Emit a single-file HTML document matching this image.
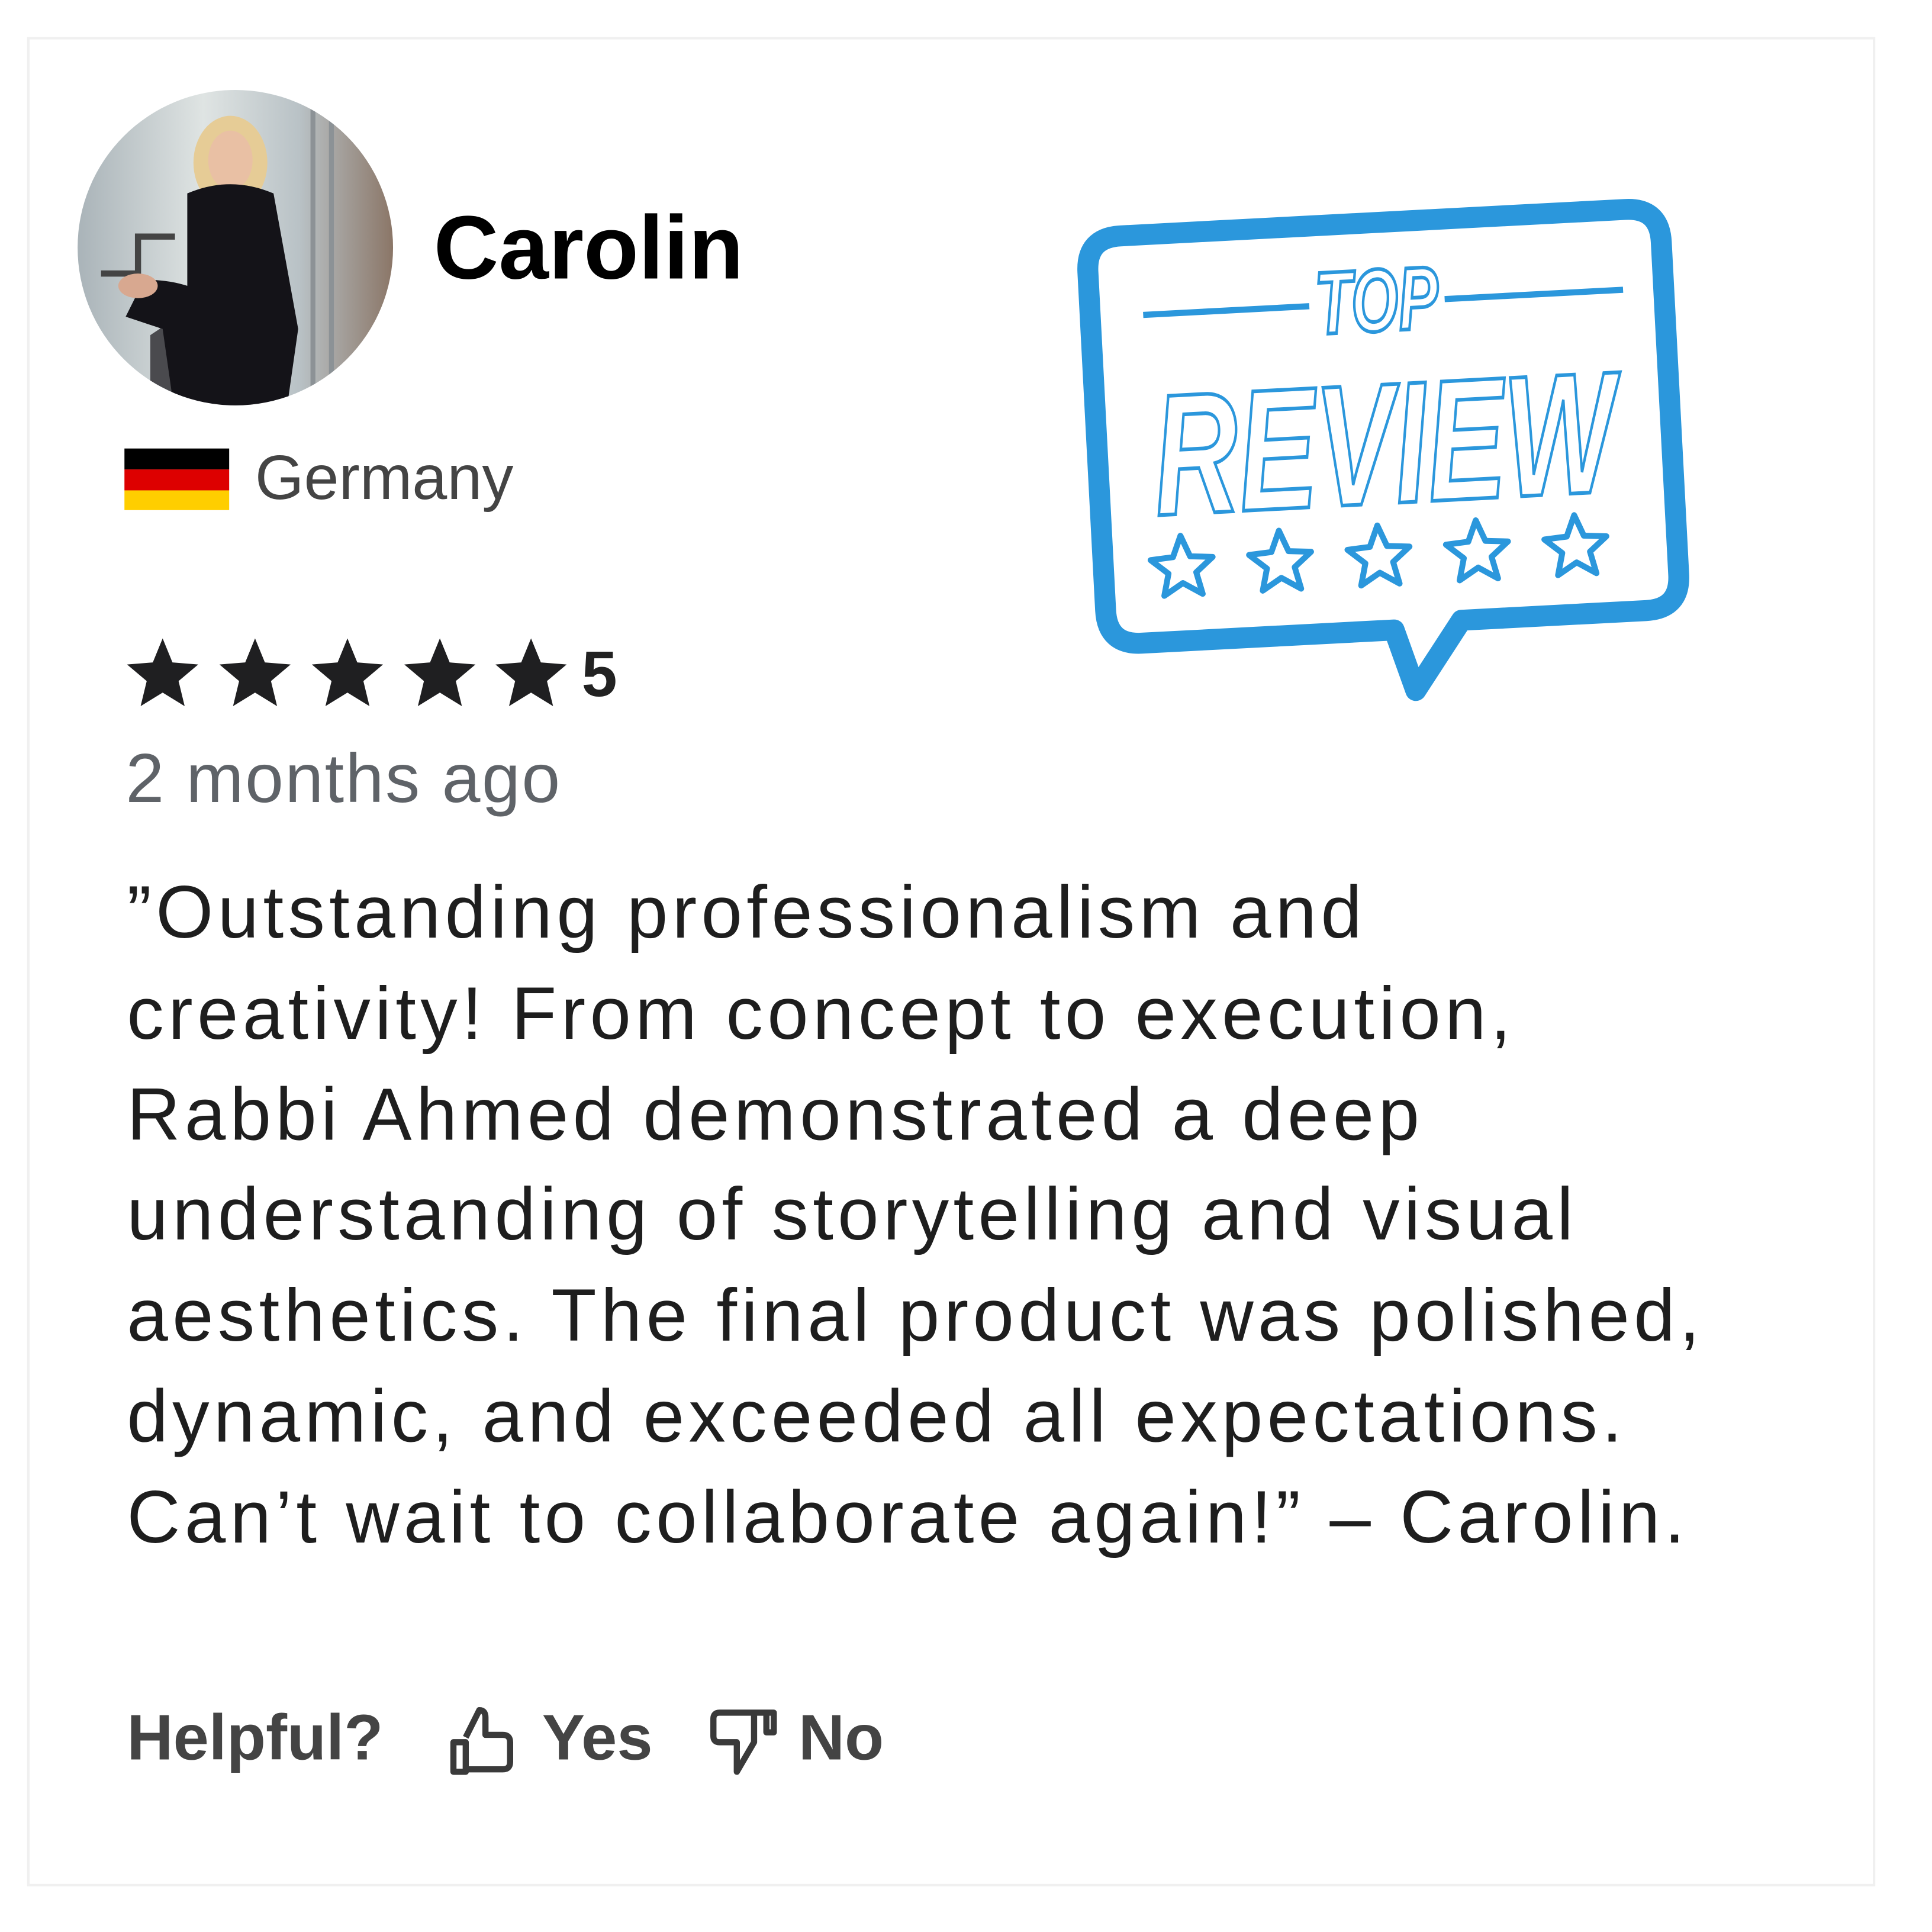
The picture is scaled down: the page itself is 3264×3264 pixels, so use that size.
<!DOCTYPE html>
<html><head><meta charset="utf-8"><style>
html,body{margin:0;padding:0;background:#fff;}
body{width:3264px;height:3264px;overflow:hidden;position:relative;}
#s{position:absolute;left:0;top:0;width:1568px;height:1568px;transform:scale(2.0816);transform-origin:0 0;font-family:"Liberation Sans",Arial,sans-serif;}
.a{position:absolute;white-space:pre;}
</style></head><body><div id="s">
<div class="a" style="left:22px;top:30px;width:1496px;height:1497px;border:2px solid #f0f0f0;"></div>
<svg class="a" style="left:62px;top:72px" width="258" height="258" viewBox="0 0 258 258">
<defs><clipPath id="c"><circle cx="129" cy="129" r="128"/></clipPath>
<linearGradient id="bg" x1="0" x2="1"><stop offset="0" stop-color="#a9b3b8"/><stop offset=".4" stop-color="#dfe4e3"/><stop offset=".7" stop-color="#b9c2c6"/><stop offset="1" stop-color="#8a7566"/></linearGradient></defs>
<g clip-path="url(#c)">
<rect width="258" height="258" fill="url(#bg)"/>
<rect x="190" y="10" width="4" height="240" fill="#8c9296"/>
<rect x="205" y="10" width="4" height="240" fill="#8c9296"/>
<path d="M20 150 h30 v-30 h30" stroke="#444" stroke-width="5" fill="none"/>
<path d="M60 200 l30-20 l15 80 h-45z" fill="#4a4a4e"/>
<ellipse cx="125" cy="60" rx="30" ry="38" fill="#e6cc96"/>
<ellipse cx="125" cy="58" rx="18" ry="24" fill="#e9c0a4"/>
<path d="M90 85 q35-15 70 0 l20 110 l-10 70 h-90 l-10-70 l-30-10 l15-30 q20 0 35 5z" fill="#141318"/>
<ellipse cx="50" cy="160" rx="16" ry="10" fill="#d8a890"/>
</g></svg>
<div class="a" style="left:352px;top:160px;font-size:73px;font-weight:bold;color:#000;line-height:84px;">Carolin</div>
<div class="a" style="left:101px;top:364px;width:85px;height:17px;background:#000"></div>
<div class="a" style="left:101px;top:381px;width:85px;height:17px;background:#dd0000"></div>
<div class="a" style="left:101px;top:398px;width:85px;height:16px;background:#ffce00"></div>
<div class="a" style="left:207px;top:358px;font-size:51px;color:#444;line-height:60px;">Germany</div>
<svg class="a" style="left:100px;top:512px" width="420" height="70" viewBox="0 0 420 70">
<g fill="#1f1f21">
<path id="st" transform="translate(-1,2) scale(2.75)" d="M12 1.5l2.9 7.1 7.6.6-5.8 4.9 1.8 7.4L12 17.5l-6.5 4 1.8-7.4-5.8-4.9 7.6-.6z"/>
<use href="#st" x="75"/><use href="#st" x="150"/><use href="#st" x="225"/><use href="#st" x="299"/>
</g></svg>
<div class="a" style="left:472px;top:518px;font-size:52px;font-weight:bold;color:#222;line-height:60px;">5</div>
<div class="a" style="left:102px;top:600px;font-size:56px;letter-spacing:1.2px;color:#5f6368;line-height:64px;">2 months ago</div>
<div class="a" style="left:103px;top:700px;font-size:60px;letter-spacing:3.5px;color:#1e1e1e;line-height:81.8px;">”Outstanding professionalism and
creativity! From concept to execution,
Rabbi Ahmed demonstrated a deep
understanding of storytelling and visual
aesthetics. The final product was polished,
dynamic, and exceeded all expectations.
Can’t wait to collaborate again!” – Carolin.</div>
<div class="a" style="left:103px;top:1380px;font-size:52px;font-weight:bold;color:#444;line-height:62px;">Helpful?</div>
<svg class="a" style="left:362px;top:1384px" width="60" height="60" viewBox="0 0 60 60" fill="none" stroke="#3a3a3a" stroke-width="5" stroke-linejoin="round">
<path d="M6 30 h10 v24 h-10z M16 52 h30 q6 0 6-6 v-16 q0-6-6-6 h-14 v-14 q0-6-5-6 l-11 22"/></svg>
<div class="a" style="left:440px;top:1380px;font-size:52px;font-weight:bold;color:#444;line-height:62px;">Yes</div>
<svg class="a" style="left:574px;top:1386px" width="60" height="60" viewBox="0 0 60 60" fill="none" stroke="#3a3a3a" stroke-width="5" stroke-linejoin="round">
<path d="M30 4 h24 v16 h-6 v-16 M30 4 h-20 q-5 0-5 5 v14 q0 5 5 5 h14 v24 l14-24 v-24"/></svg>
<div class="a" style="left:648px;top:1380px;font-size:52px;font-weight:bold;color:#444;line-height:62px;">No</div>
<svg class="a" style="left:872px;top:130px" width="520" height="450" viewBox="0 0 520 450">
<g transform="rotate(-3 260 200)">
<path d="M45 50 h410 q28 0 28 28 v270 q0 28-28 28 h-150 l-40 55 l-15-50 h-205 q-28 0-28-28 v-275 q0-28 28-28z" fill="none" stroke="#2b97dc" stroke-width="17" stroke-linejoin="round"/>
<g fill="#fff" stroke="#2b97dc" stroke-width="3" font-family="Liberation Sans,sans-serif" font-weight="bold" font-style="italic">
<line x1="60" y1="115" x2="195" y2="115" stroke-width="5"/>
<line x1="305" y1="115" x2="450" y2="115" stroke-width="5"/>
<text x="250" y="138" font-size="72" text-anchor="middle" textLength="100" lengthAdjust="spacingAndGlyphs">TOP</text>
<text x="250" y="278" font-size="140" text-anchor="middle" textLength="375" lengthAdjust="spacingAndGlyphs">REVIEW</text>
</g>
<g fill="#fff" stroke="#2b97dc" stroke-width="2" stroke-linejoin="round">
<path id="bs" transform="translate(52,292) scale(2.4)" d="M12 1.5l2.9 7.1 7.6.6-5.8 4.9 1.8 7.4L12 17.5l-6.5 4 1.8-7.4-5.8-4.9 7.6-.6z"/>
<use href="#bs" x="80"/><use href="#bs" x="160"/><use href="#bs" x="240"/><use href="#bs" x="320"/>
</g></g></svg>
</div></body></html>
